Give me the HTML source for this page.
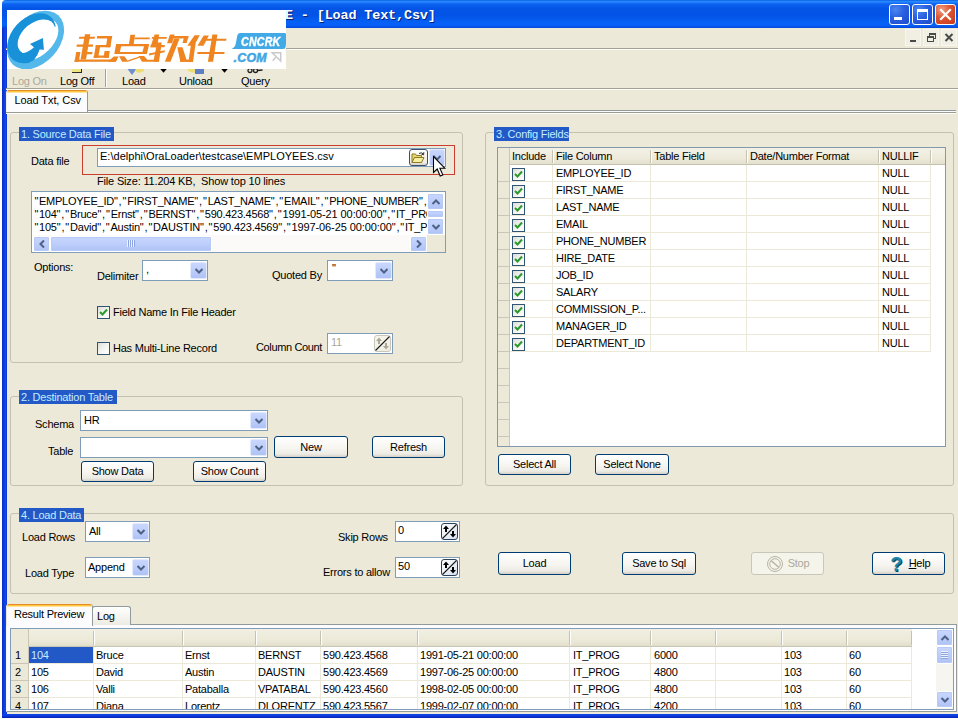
<!DOCTYPE html>
<html>
<head>
<meta charset="utf-8">
<title>Load Text,Csv</title>
<style>
html,body{margin:0;padding:0;overflow:hidden;}
body{width:958px;height:719px;overflow:hidden;background:#fff;position:relative;font-family:"Liberation Sans",sans-serif;font-size:11px;letter-spacing:-0.23px;color:#000;}
.a{position:absolute;box-sizing:border-box;}
.t{position:absolute;white-space:pre;line-height:13px;height:13px;}
/* window chrome */
#win{left:2px;top:0;width:956px;height:718px;background:#ECE9D8;border-top-left-radius:4px;overflow:hidden;}
#title{left:0;top:0;width:960px;height:28px;background:linear-gradient(180deg,#0A5FE0 0%,#2A8CFF 6%,#0D62F2 14%,#0455E6 30%,#0354E6 55%,#0560F5 80%,#0660F8 90%,#0248D8 100%);}
#lb{left:0;top:28px;width:4.6px;height:690px;background:linear-gradient(90deg,#0A2CC8,#0B3CE0 40%,#1648E6 70%,#0A34D0);}
#bb{left:0;top:714px;width:960px;height:4px;background:linear-gradient(180deg,#1648E6,#0B3CE0 40%,#0A2CC8 80%,#061FA8);}
.cap{width:21px;height:21px;top:4px;border:1px solid #fff;border-radius:3px;background:radial-gradient(circle at 30% 25%,#4B86F0 0%,#2A5FE0 45%,#1F4BC8 100%);}
.cap.x{background:radial-gradient(circle at 30% 25%,#F0A080 0%,#DD5330 45%,#C2391C 100%);}
/* group boxes */
.gb{border:1px solid #C4C1B0;border-radius:3px;}
.gl{background:#2359C6;color:#C2ECFF;height:14.4px;line-height:14px;padding-left:2px;white-space:pre;}
/* edits */
.ed{border:1px solid #7F9DB9;background:#fff;}
.btn{border:1px solid #003C74;border-radius:3px;background:linear-gradient(180deg,#FFFFFF 0%,#F6F5F0 55%,#ECEBE4 85%,#D6D0C5 100%);text-align:center;line-height:19px;white-space:pre;}
.btn.dis{border-color:#C9C7BA;background:#F5F4EA;color:#ACA899;}
.dd{width:17px;background:linear-gradient(180deg,#C9D7FE 0%,#BDCEFB 50%,#AEC2F5 100%);border:1px solid #E3EAFE;border-radius:2px;box-shadow:0 0 0 0px #B4C8F6;}
.sb{background:linear-gradient(180deg,#C9D7FE 0%,#BDCEFB 50%,#AEC2F5 100%);border:1px solid #fff;border-radius:2px;box-shadow:inset 0 0 0 1px #B7CAF5;}
.q{letter-spacing:0.8px;}.q1{letter-spacing:0.5px;}
.cb{width:13px;height:13px;border:1px solid #2F5572;background:linear-gradient(135deg,#DCDCD7 0%,#F3F3F0 50%,#FFFFFF 100%);}
</style>
</head>
<body>
<div id="win" class="a">
  <div id="title" class="a"></div>
  <div id="lb" class="a"></div>
  <div id="bb" class="a"></div>
</div>

<div class="t" id="ttl" style="left:285px;top:7.7px;height:18px;line-height:18px;font:bold 13.5px 'Liberation Mono',monospace;letter-spacing:-0.17px;color:#fff;text-shadow:1px 1px 0 #0A1F6E;">E - [Load Text,Csv]</div>
<!-- caption buttons -->
<div class="a cap" style="left:889px;"><div class="a" style="left:4px;top:12px;width:8px;height:3px;background:#fff;"></div></div>
<div class="a cap" style="left:912px;"><div class="a" style="left:4px;top:4px;width:11px;height:11px;border:1px solid #fff;border-top-width:3px;"></div></div>
<div class="a cap x" style="left:935px;"><svg class="a" style="left:0;top:0" width="19" height="19"><path d="M5 5 L14 14 M14 5 L5 14" stroke="#fff" stroke-width="2.2" stroke-linecap="square"/></svg></div>
<!-- mdi buttons -->
<div class="a" style="left:905px;top:29px;width:16px;height:17px;background:#F1EFE4;border:1px solid #F7F6EF;"><div class="a" style="left:4px;top:10px;width:6px;height:2px;background:#4A4A48;"></div></div>
<div class="a" style="left:923px;top:29px;width:16px;height:17px;background:#F1EFE4;border:1px solid #F7F6EF;"><div class="a" style="left:5px;top:3px;width:7px;height:6px;border:1px solid #4A4A48;border-top-width:2px;"></div><div class="a" style="left:3px;top:6px;width:7px;height:6px;border:1px solid #4A4A48;border-top-width:2px;background:#F1EFE4;"></div></div>
<div class="a" style="left:941px;top:29px;width:16px;height:17px;background:#F1EFE4;border:1px solid #F7F6EF;"><svg class="a" style="left:0;top:0" width="14" height="15"><path d="M3.5 4 L10.5 11 M10.5 4 L3.5 11" stroke="#4A4A48" stroke-width="2"/></svg></div>
<!-- menu/toolbar lines -->
<div class="a" style="left:6px;top:48px;width:952px;height:1px;background:#A5A291;"></div>
<div class="a" style="left:6px;top:49px;width:952px;height:1px;background:#fff;"></div>
<div class="a" style="left:6px;top:88px;width:952px;height:1px;background:#A5A291;"></div>
<div class="a" style="left:6px;top:89px;width:952px;height:1px;background:#fff;"></div>


<!-- toolbar -->
<div class="t" style="left:12px;top:75px;color:#ACA899;">Log On</div>
<div class="t" style="left:60px;top:75px;">Log Off</div>
<div class="a" style="left:105px;top:52px;width:1px;height:35px;background:#A5A291;"></div>
<div class="a" style="left:106px;top:52px;width:1px;height:35px;background:#fff;"></div>
<div class="t" style="left:122px;top:75px;">Load</div>
<div class="t" style="left:179px;top:75px;">Unload</div>
<div class="t" style="left:241px;top:75px;">Query</div>
<!-- icon remnants below logo -->
<div class="a" style="left:72px;top:65px;width:10px;height:8px;background:#EDE680;border:1px solid #2A2A2A;border-top:none;border-left:none;"></div>
<svg class="a" style="left:120px;top:66.5px" width="30" height="10"><path d="M6 0 L18 0 L12 8 Z" fill="#6E8FD0"/><path d="M15 0 L24 0 L24 4 Q20 7 16 5 Z" fill="#EBDD72"/></svg>
<svg class="a" style="left:184px;top:66px" width="26" height="10"><path d="M4 0 L14 0 L14 6 Q9 8 4 5 Z" fill="#EBDD72"/><rect x="11" y="2" width="9" height="6" fill="#5F7FC4"/></svg>
<svg class="a" style="left:244px;top:66px" width="22" height="10"><circle cx="6" cy="4.5" r="2" fill="none" stroke="#222" stroke-width="1.3"/><circle cx="11.5" cy="4.5" r="2" fill="none" stroke="#222" stroke-width="1.3"/><path d="M13.5 4.5 L18.5 4" stroke="#222" stroke-width="1.6"/></svg>
<svg class="a" style="left:159px;top:66px" width="9" height="8"><path d="M1.3 3 L7.7 3 L4.5 6.8 Z" fill="#000"/></svg>
<svg class="a" style="left:220px;top:66px" width="9" height="8"><path d="M1.3 3 L7.7 3 L4.5 6.8 Z" fill="#000"/></svg>
<!-- top tab strip -->
<div class="a" style="left:87px;top:110px;width:869px;height:1px;background:#919B9C;"></div>
<div class="a" style="left:6px;top:111px;width:950px;height:1px;background:#FCFCFE;"></div>
<div class="a" style="left:6px;top:112px;width:950px;height:1px;background:#9A9C92;"></div>
<div class="a" style="left:6px;top:113px;width:950px;height:1px;background:#fff;"></div>
<div class="a" style="left:6px;top:90px;width:82px;height:22px;background:#FCFCFE;border:1px solid #919B9C;border-left-color:#F0EFE6;border-bottom:none;border-top:none;border-radius:3px 3px 0 0;overflow:hidden;"><div class="a" style="left:-1px;top:0;width:81px;height:3px;background:linear-gradient(180deg,#E68B2C 0,#E68B2C 33%,#FFC73C 34%,#FFC73C 66%,#FFE39A 67%);"></div></div>
<div class="t" style="left:14.4px;top:94px;letter-spacing:-0.08px;">Load Txt, Csv</div>


<div class="a gb" style="left:10px;top:132px;width:453px;height:231px;"></div>
<div class="a gl" style="left:19px;top:127px;width:95px;">1. Source Data File</div>
<div class="a" style="left:82px;top:145px;width:373px;height:30px;border:1px solid #CB3D2F;"></div>
<div class="t" style="left:31px;top:155px;">Data file</div>
<div class="a ed" style="left:97px;top:148px;width:349px;height:19px;"></div>
<div class="t" style="left:100px;top:150px;letter-spacing:0.02px;">E:\delphi\OraLoader\testcase\EMPLOYEES.csv</div>
<div class="a" style="left:409px;top:149px;width:19px;height:17px;border:1px solid #3A4F6E;border-radius:3px;background:linear-gradient(180deg,#fff,#ECEBE4 85%,#D6D0C5);"></div>
<svg class="a" style="left:411px;top:151px" width="15" height="13"><path d="M1 3 L1 11.5 L10.5 11.5 L10.5 4.5 L5.5 4.5 L4.5 3 Z" fill="#E8D66A" stroke="#8A7A2A" stroke-width="1"/><path d="M1 11.5 L3.5 6.5 L13 6.5 L10.5 11.5 Z" fill="#F7EFA0" stroke="#8A7A2A" stroke-width="1"/><path d="M8 2.5 Q11 0.5 12.5 3.5 M12.8 1.2 L12.6 3.8 L10.4 3.2" fill="none" stroke="#333" stroke-width="1"/></svg>
<div class="a dd" style="left:429px;top:149px;width:16px;height:17px;"></div>
<svg class="a" style="left:431px;top:152px" width="12" height="12"><path transform="translate(6 6)" d="M-3.5 -2 L0 1.5 L3.5 -2" fill="none" stroke="#4D6185" stroke-width="2"/></svg>
<div class="t" style="left:97px;top:175px;letter-spacing:-0.17px;">File Size: 11.204 KB,  Show top 10 lines</div>
<!-- memo -->
<div class="a ed" style="left:31px;top:191px;width:415px;height:62px;"></div>
<div class="a" style="left:33px;top:193px;width:394px;height:41px;overflow:hidden;letter-spacing:-0.25px;"><div class="t" style="left:1.6px;top:2px;"><span class="q1">"</span>EMPLOYEE_ID<span class="q">","</span>FIRST_NAME<span class="q">","</span>LAST_NAME<span class="q">","</span>EMAIL<span class="q">","</span>PHONE_NUMBER<span class="q">","</span>HIRE_DATE</div><div class="t" style="left:1.6px;top:15px;"><span class="q1">"</span>104<span class="q">","</span>Bruce<span class="q">","</span>Ernst<span class="q">","</span>BERNST<span class="q">","</span>590.423.4568<span class="q">","</span><span style="letter-spacing:-0.1px">1991-05-21 00:00:00</span><span class="q">","</span>IT_PROG</div><div class="t" style="left:1.6px;top:28px;letter-spacing:-0.2px;"><span class="q1">"</span>105<span class="q">","</span>David<span class="q">","</span>Austin<span class="q">","</span>DAUSTIN<span class="q">","</span>590.423.4569<span class="q">","</span><span style="letter-spacing:-0.1px">1997-06-25 00:00:00</span><span class="q">","</span>IT_PROG</div></div>
<div class="a" style="left:427px;top:193px;width:17px;height:42px;background:#FBFAF8;"></div>
<div class="a" style="left:33px;top:235px;width:394px;height:17px;background:#FBFAF8;"></div>
<div class="a" style="left:427px;top:235px;width:18px;height:17px;background:#ECE9D8;"></div>
<div class="a sb" style="left:427px;top:193px;width:17px;height:17px;"></div><svg class="a" style="left:429.5px;top:195.5px" width="12" height="12"><path transform="translate(6 6)" d="M-3.5 2 L0 -1.5 L3.5 2" fill="none" stroke="#4D6185" stroke-width="2"/></svg><div class="a sb" style="left:427px;top:218px;width:17px;height:17px;"></div><svg class="a" style="left:429.5px;top:220.5px" width="12" height="12"><path transform="translate(6 6)" d="M-3.5 -2 L0 1.5 L3.5 -2" fill="none" stroke="#4D6185" stroke-width="2"/></svg>
<div class="a sb" style="left:427px;top:210px;width:17px;height:8px;"></div>
<div class="a sb" style="left:33px;top:236px;width:17px;height:16px;"></div><svg class="a" style="left:35.5px;top:237.5px" width="12" height="12"><path transform="translate(6 6)" d="M2 -3.5 L-1.5 0 L2 3.5" fill="none" stroke="#4D6185" stroke-width="2"/></svg><div class="a sb" style="left:410px;top:236px;width:17px;height:16px;"></div><svg class="a" style="left:412.5px;top:237.5px" width="12" height="12"><path transform="translate(6 6)" d="M-2 -3.5 L1.5 0 L-2 3.5" fill="none" stroke="#4D6185" stroke-width="2"/></svg>
<div class="a sb" style="left:50px;top:236px;width:162px;height:16px;"></div>
<div class="a" style="left:127px;top:240px;width:1px;height:7px;background:#EEF3FE;box-shadow:1px 0 0 #8CA5E0,2px 0 0 #EEF3FE,3px 0 0 #8CA5E0,4px 0 0 #EEF3FE,5px 0 0 #8CA5E0,6px 0 0 #EEF3FE,7px 0 0 #8CA5E0;"></div>
<div class="t" style="left:34px;top:261px;">Options:</div>
<div class="t" style="left:97px;top:270px;">Delimiter</div>
<div class="a ed" style="left:142px;top:260px;width:66px;height:21px;"></div><div class="a dd" style="left:190px;top:262px;height:17px;"></div><svg class="a" style="left:192.5px;top:265.0px" width="12" height="12"><path transform="translate(6 6)" d="M-3.5 -2 L0 1.5 L3.5 -2" fill="none" stroke="#4D6185" stroke-width="2"/></svg><div class="t" style="left:146px;top:263px;">,</div>
<div class="t" style="left:272px;top:269px;">Quoted By</div>
<div class="a ed" style="left:327px;top:260px;width:66px;height:21px;"></div><div class="a dd" style="left:375px;top:262px;height:17px;"></div><svg class="a" style="left:377.5px;top:265.0px" width="12" height="12"><path transform="translate(6 6)" d="M-3.5 -2 L0 1.5 L3.5 -2" fill="none" stroke="#4D6185" stroke-width="2"/></svg><div class="t" style="left:332px;top:262px;">"</div>
<div class="a cb" style="left:97px;top:306px;"></div>
<svg class="a" style="left:97px;top:306px" width="13" height="13"><path d="M3 6 L5.5 8.5 L10 3.5" fill="none" stroke="#2B9A2B" stroke-width="2"/></svg>
<div class="t" style="left:113px;top:306px;">Field Name In File Header</div>
<div class="a cb" style="left:97px;top:342px;"></div>
<div class="t" style="left:113px;top:342px;">Has Multi-Line Record</div>
<div class="t" style="left:256px;top:341px;letter-spacing:-0.36px;">Column Count</div>
<div class="a ed" style="left:327px;top:333px;width:66px;height:21px;"></div>
<div class="t" style="left:331px;top:336px;color:#ACA899;">11</div>
<svg class="a" style="left:374px;top:335px" width="17" height="17"><defs><linearGradient id="sg374335" x1="0" y1="0" x2="1" y2="1"><stop offset="0" stop-color="#F7F6EE"/><stop offset="1" stop-color="#EFEDE2"/></linearGradient></defs><rect x="0.5" y="0.5" width="16" height="16" rx="2.5" fill="url(#sg374335)" stroke="#C9C7BA"/><path d="M1.5 15.5 L15.5 1.5" stroke="#1a1a1a" stroke-width="1.1"/><path d="M5 2.5 L2 6 L4 6 L4 9 L6 9 L6 6 L8 6 Z" fill="#ACA899"/><path d="M12 14.5 L9 11 L11 11 L11 8 L13 8 L13 11 L15 11 Z" fill="#ACA899"/></svg>


<div class="a gb" style="left:10px;top:396px;width:453px;height:90px;"></div>
<div class="a gl" style="left:19px;top:390px;width:98px;">2. Destination Table</div>
<div class="t" style="left:35px;top:418px;">Schema</div>
<div class="a ed" style="left:80px;top:410px;width:188px;height:21px;"></div><div class="a dd" style="left:250px;top:412px;height:17px;"></div><svg class="a" style="left:252.5px;top:415.0px" width="12" height="12"><path transform="translate(6 6)" d="M-3.5 -2 L0 1.5 L3.5 -2" fill="none" stroke="#4D6185" stroke-width="2"/></svg><div class="t" style="left:84px;top:414px;">HR</div>
<div class="t" style="left:48px;top:445px;">Table</div>
<div class="a ed" style="left:80px;top:437px;width:188px;height:21px;"></div><div class="a dd" style="left:250px;top:439px;height:17px;"></div><svg class="a" style="left:252.5px;top:442.0px" width="12" height="12"><path transform="translate(6 6)" d="M-3.5 -2 L0 1.5 L3.5 -2" fill="none" stroke="#4D6185" stroke-width="2"/></svg><div class="a btn " style="left:274px;top:436px;width:74px;height:22px;line-height:20px;">New</div><div class="a btn " style="left:372px;top:436px;width:73px;height:22px;line-height:20px;">Refresh</div><div class="a btn " style="left:81px;top:461px;width:73px;height:21px;line-height:19px;">Show Data</div><div class="a btn " style="left:193px;top:461px;width:73px;height:21px;line-height:19px;">Show Count</div>

<div class="a gb" style="left:485px;top:132px;width:469px;height:354px;"></div>
<div class="a gl" style="left:494px;top:127px;width:75px;">3. Config Fields</div>
<div class="a" style="left:497px;top:147px;width:449px;height:300px;border:1px solid #8497AC;background:#fff;"></div>
<div class="a" style="left:498px;top:148px;width:447px;height:17px;background:linear-gradient(180deg,#F3F1E6 0%,#EEEBDC 60%,#E4E0CE 100%);border-bottom:1px solid #C5C1B0;"></div>
<div class="a" style="left:498px;top:148px;width:12px;height:298px;background:#ECE9D8;border-right:1px solid #CBC7B8;"></div>
<div class="a" style="left:552px;top:150px;width:1px;height:13px;background:#C5C2B2;"></div><div class="a" style="left:553px;top:150px;width:1px;height:13px;background:#fff;"></div><div class="a" style="left:650px;top:150px;width:1px;height:13px;background:#C5C2B2;"></div><div class="a" style="left:651px;top:150px;width:1px;height:13px;background:#fff;"></div><div class="a" style="left:746px;top:150px;width:1px;height:13px;background:#C5C2B2;"></div><div class="a" style="left:747px;top:150px;width:1px;height:13px;background:#fff;"></div><div class="a" style="left:878px;top:150px;width:1px;height:13px;background:#C5C2B2;"></div><div class="a" style="left:879px;top:150px;width:1px;height:13px;background:#fff;"></div><div class="a" style="left:930px;top:150px;width:1px;height:13px;background:#C5C2B2;"></div><div class="a" style="left:931px;top:150px;width:1px;height:13px;background:#fff;"></div><div class="t" style="left:512px;top:150px;">Include</div><div class="t" style="left:556px;top:150px;">File Column</div><div class="t" style="left:654px;top:150px;">Table Field</div><div class="t" style="left:750px;top:150px;">Date/Number Format</div><div class="t" style="left:882px;top:150px;">NULLIF</div><div class="a" style="left:510px;top:181px;width:421px;height:1px;background:#ECE9D8;"></div><div class="a cb" style="left:512px;top:168px;border-color:#2F5572;"></div><svg class="a" style="left:512px;top:168px" width="13" height="13"><path d="M3 6 L5.5 8.5 L10 3.5" fill="none" stroke="#2B9A2B" stroke-width="2"/></svg><div class="t" style="left:556px;top:167px;">EMPLOYEE_ID</div><div class="t" style="left:882px;top:167px;">NULL</div><div class="a" style="left:510px;top:198px;width:421px;height:1px;background:#ECE9D8;"></div><div class="a cb" style="left:512px;top:185px;border-color:#2F5572;"></div><svg class="a" style="left:512px;top:185px" width="13" height="13"><path d="M3 6 L5.5 8.5 L10 3.5" fill="none" stroke="#2B9A2B" stroke-width="2"/></svg><div class="t" style="left:556px;top:184px;">FIRST_NAME</div><div class="t" style="left:882px;top:184px;">NULL</div><div class="a" style="left:510px;top:215px;width:421px;height:1px;background:#ECE9D8;"></div><div class="a cb" style="left:512px;top:202px;border-color:#2F5572;"></div><svg class="a" style="left:512px;top:202px" width="13" height="13"><path d="M3 6 L5.5 8.5 L10 3.5" fill="none" stroke="#2B9A2B" stroke-width="2"/></svg><div class="t" style="left:556px;top:201px;">LAST_NAME</div><div class="t" style="left:882px;top:201px;">NULL</div><div class="a" style="left:510px;top:232px;width:421px;height:1px;background:#ECE9D8;"></div><div class="a cb" style="left:512px;top:219px;border-color:#2F5572;"></div><svg class="a" style="left:512px;top:219px" width="13" height="13"><path d="M3 6 L5.5 8.5 L10 3.5" fill="none" stroke="#2B9A2B" stroke-width="2"/></svg><div class="t" style="left:556px;top:218px;">EMAIL</div><div class="t" style="left:882px;top:218px;">NULL</div><div class="a" style="left:510px;top:249px;width:421px;height:1px;background:#ECE9D8;"></div><div class="a cb" style="left:512px;top:236px;border-color:#2F5572;"></div><svg class="a" style="left:512px;top:236px" width="13" height="13"><path d="M3 6 L5.5 8.5 L10 3.5" fill="none" stroke="#2B9A2B" stroke-width="2"/></svg><div class="t" style="left:556px;top:235px;">PHONE_NUMBER</div><div class="t" style="left:882px;top:235px;">NULL</div><div class="a" style="left:510px;top:266px;width:421px;height:1px;background:#ECE9D8;"></div><div class="a cb" style="left:512px;top:253px;border-color:#2F5572;"></div><svg class="a" style="left:512px;top:253px" width="13" height="13"><path d="M3 6 L5.5 8.5 L10 3.5" fill="none" stroke="#2B9A2B" stroke-width="2"/></svg><div class="t" style="left:556px;top:252px;">HIRE_DATE</div><div class="t" style="left:882px;top:252px;">NULL</div><div class="a" style="left:510px;top:283px;width:421px;height:1px;background:#ECE9D8;"></div><div class="a cb" style="left:512px;top:270px;border-color:#2F5572;"></div><svg class="a" style="left:512px;top:270px" width="13" height="13"><path d="M3 6 L5.5 8.5 L10 3.5" fill="none" stroke="#2B9A2B" stroke-width="2"/></svg><div class="t" style="left:556px;top:269px;">JOB_ID</div><div class="t" style="left:882px;top:269px;">NULL</div><div class="a" style="left:510px;top:300px;width:421px;height:1px;background:#ECE9D8;"></div><div class="a cb" style="left:512px;top:287px;border-color:#2F5572;"></div><svg class="a" style="left:512px;top:287px" width="13" height="13"><path d="M3 6 L5.5 8.5 L10 3.5" fill="none" stroke="#2B9A2B" stroke-width="2"/></svg><div class="t" style="left:556px;top:286px;">SALARY</div><div class="t" style="left:882px;top:286px;">NULL</div><div class="a" style="left:510px;top:317px;width:421px;height:1px;background:#ECE9D8;"></div><div class="a cb" style="left:512px;top:304px;border-color:#2F5572;"></div><svg class="a" style="left:512px;top:304px" width="13" height="13"><path d="M3 6 L5.5 8.5 L10 3.5" fill="none" stroke="#2B9A2B" stroke-width="2"/></svg><div class="t" style="left:556px;top:303px;">COMMISSION_P...</div><div class="t" style="left:882px;top:303px;">NULL</div><div class="a" style="left:510px;top:334px;width:421px;height:1px;background:#ECE9D8;"></div><div class="a cb" style="left:512px;top:321px;border-color:#2F5572;"></div><svg class="a" style="left:512px;top:321px" width="13" height="13"><path d="M3 6 L5.5 8.5 L10 3.5" fill="none" stroke="#2B9A2B" stroke-width="2"/></svg><div class="t" style="left:556px;top:320px;">MANAGER_ID</div><div class="t" style="left:882px;top:320px;">NULL</div><div class="a" style="left:510px;top:351px;width:421px;height:1px;background:#ECE9D8;"></div><div class="a cb" style="left:512px;top:338px;border-color:#2F5572;"></div><svg class="a" style="left:512px;top:338px" width="13" height="13"><path d="M3 6 L5.5 8.5 L10 3.5" fill="none" stroke="#2B9A2B" stroke-width="2"/></svg><div class="t" style="left:556px;top:337px;">DEPARTMENT_ID</div><div class="t" style="left:882px;top:337px;">NULL</div><div class="a" style="left:552px;top:165px;width:1px;height:187px;background:#ECE9D8;"></div><div class="a" style="left:650px;top:165px;width:1px;height:187px;background:#ECE9D8;"></div><div class="a" style="left:746px;top:165px;width:1px;height:187px;background:#ECE9D8;"></div><div class="a" style="left:878px;top:165px;width:1px;height:187px;background:#ECE9D8;"></div><div class="a" style="left:930px;top:165px;width:1px;height:187px;background:#ECE9D8;"></div><div class="a" style="left:498px;top:181px;width:11px;height:1px;background:#CBC7B8;"></div><div class="a" style="left:498px;top:198px;width:11px;height:1px;background:#CBC7B8;"></div><div class="a" style="left:498px;top:215px;width:11px;height:1px;background:#CBC7B8;"></div><div class="a" style="left:498px;top:232px;width:11px;height:1px;background:#CBC7B8;"></div><div class="a" style="left:498px;top:249px;width:11px;height:1px;background:#CBC7B8;"></div><div class="a" style="left:498px;top:266px;width:11px;height:1px;background:#CBC7B8;"></div><div class="a" style="left:498px;top:283px;width:11px;height:1px;background:#CBC7B8;"></div><div class="a" style="left:498px;top:300px;width:11px;height:1px;background:#CBC7B8;"></div><div class="a" style="left:498px;top:317px;width:11px;height:1px;background:#CBC7B8;"></div><div class="a" style="left:498px;top:334px;width:11px;height:1px;background:#CBC7B8;"></div><div class="a" style="left:498px;top:351px;width:11px;height:1px;background:#CBC7B8;"></div><div class="a" style="left:498px;top:368px;width:11px;height:1px;background:#CBC7B8;"></div><div class="a" style="left:498px;top:385px;width:11px;height:1px;background:#CBC7B8;"></div><div class="a" style="left:498px;top:402px;width:11px;height:1px;background:#CBC7B8;"></div><div class="a" style="left:498px;top:419px;width:11px;height:1px;background:#CBC7B8;"></div><div class="a" style="left:498px;top:436px;width:11px;height:1px;background:#CBC7B8;"></div><div class="a btn " style="left:498px;top:454px;width:73px;height:21px;line-height:19px;">Select All</div><div class="a btn " style="left:595px;top:454px;width:74px;height:21px;line-height:19px;">Select None</div>

<div class="a gb" style="left:10px;top:513px;width:944px;height:81px;"></div>
<div class="a gl" style="left:19px;top:508px;width:65px;">4. Load Data</div>
<div class="t" style="left:22px;top:531px;">Load Rows</div>
<div class="a ed" style="left:85px;top:521px;width:65px;height:21px;"></div><div class="a dd" style="left:132px;top:523px;height:17px;"></div><svg class="a" style="left:134.5px;top:526.0px" width="12" height="12"><path transform="translate(6 6)" d="M-3.5 -2 L0 1.5 L3.5 -2" fill="none" stroke="#4D6185" stroke-width="2"/></svg><div class="t" style="left:89px;top:525px;">All</div>
<div class="t" style="left:25px;top:567px;">Load Type</div>
<div class="a ed" style="left:85px;top:557px;width:65px;height:21px;"></div><div class="a dd" style="left:132px;top:559px;height:17px;"></div><svg class="a" style="left:134.5px;top:562.0px" width="12" height="12"><path transform="translate(6 6)" d="M-3.5 -2 L0 1.5 L3.5 -2" fill="none" stroke="#4D6185" stroke-width="2"/></svg><div class="t" style="left:88px;top:561px;">Append</div>
<div class="t" style="left:338px;top:531px;">Skip Rows</div>
<div class="a ed" style="left:395px;top:521px;width:65px;height:21px;"></div>
<div class="t" style="left:398px;top:524px;">0</div>
<div class="t" style="left:323px;top:566px;">Errors to allow</div>
<div class="a ed" style="left:395px;top:557px;width:65px;height:21px;"></div>
<div class="t" style="left:398px;top:560px;">50</div>
<svg class="a" style="left:441px;top:523px" width="17" height="17"><defs><linearGradient id="sg441523" x1="0" y1="0" x2="1" y2="1"><stop offset="0" stop-color="#FFFFFF"/><stop offset="1" stop-color="#D6E0EE"/></linearGradient></defs><rect x="0.5" y="0.5" width="16" height="16" rx="2.5" fill="url(#sg441523)" stroke="#2C4258"/><path d="M1.5 15.5 L15.5 1.5" stroke="#1a1a1a" stroke-width="1.1"/><path d="M5 2.5 L2 6 L4 6 L4 9 L6 9 L6 6 L8 6 Z" fill="#000"/><path d="M12 14.5 L9 11 L11 11 L11 8 L13 8 L13 11 L15 11 Z" fill="#000"/></svg><svg class="a" style="left:441px;top:559px" width="17" height="17"><defs><linearGradient id="sg441559" x1="0" y1="0" x2="1" y2="1"><stop offset="0" stop-color="#FFFFFF"/><stop offset="1" stop-color="#D6E0EE"/></linearGradient></defs><rect x="0.5" y="0.5" width="16" height="16" rx="2.5" fill="url(#sg441559)" stroke="#2C4258"/><path d="M1.5 15.5 L15.5 1.5" stroke="#1a1a1a" stroke-width="1.1"/><path d="M5 2.5 L2 6 L4 6 L4 9 L6 9 L6 6 L8 6 Z" fill="#000"/><path d="M12 14.5 L9 11 L11 11 L11 8 L13 8 L13 11 L15 11 Z" fill="#000"/></svg>
<div class="a btn " style="left:498px;top:552px;width:73px;height:23px;line-height:21px;">Load</div><div class="a btn " style="left:622px;top:552px;width:74px;height:23px;line-height:21px;">Save to Sql</div><div class="a btn dis" style="left:751px;top:552px;width:73px;height:23px;line-height:21px;"><span style="padding-left:22px">Stop</span></div><div class="a btn " style="left:872px;top:552px;width:73px;height:23px;line-height:21px;"><span style="padding-left:22px"><u>H</u>elp</span></div>

<!-- result tabs -->
<div class="a" style="left:6px;top:624px;width:951px;height:88px;background:#FCFCFE;border:1px solid #919B9C;border-left-color:#F4F6FB;"></div>
<div class="a" style="left:92px;top:606px;width:39px;height:19px;background:linear-gradient(180deg,#fff,#F4F3EE 60%,#ECEBE3);border:1px solid #919B9C;border-bottom:none;border-radius:3px 3px 0 0;"></div>
<div class="t" style="left:97px;top:610px;">Log</div>
<div class="a" style="left:6px;top:604px;width:87px;height:22px;background:#FCFCFE;border:1px solid #919B9C;border-left-color:#E8E6D8;border-bottom:none;border-top:none;border-radius:3px 3px 0 0;overflow:hidden;"><div class="a" style="left:-1px;top:0;width:86px;height:3px;background:linear-gradient(180deg,#E68B2C 0,#E68B2C 33%,#FFC73C 34%,#FFC73C 66%,#FFE39A 67%);"></div></div>
<div class="t" style="left:14px;top:608px;">Result Preview</div>
<!-- result grid -->
<div class="a" style="left:10px;top:628px;width:944px;height:82px;border:1px solid #7F9DB9;background:#fff;overflow:hidden;" id="rg">
<div class="a" style="left:0;top:0;width:901px;height:18px;background:linear-gradient(180deg,#F1EFE2 0%,#ECE9D8 70%,#E2DECB 100%);border-bottom:1px solid #C9C6B6;"></div>
<div class="a" style="left:0;top:0;width:18px;height:90px;background:#ECE9D8;border-right:1px solid #C9C6B6;"></div>
<div class="a" style="left:82px;top:2px;width:1px;height:14px;background:#C5C2B2;"></div><div class="a" style="left:83px;top:2px;width:1px;height:14px;background:#fff;"></div><div class="a" style="left:82px;top:18px;width:1px;height:70px;background:#ECE9D8;"></div><div class="a" style="left:171px;top:2px;width:1px;height:14px;background:#C5C2B2;"></div><div class="a" style="left:172px;top:2px;width:1px;height:14px;background:#fff;"></div><div class="a" style="left:171px;top:18px;width:1px;height:70px;background:#ECE9D8;"></div><div class="a" style="left:244px;top:2px;width:1px;height:14px;background:#C5C2B2;"></div><div class="a" style="left:245px;top:2px;width:1px;height:14px;background:#fff;"></div><div class="a" style="left:244px;top:18px;width:1px;height:70px;background:#ECE9D8;"></div><div class="a" style="left:309px;top:2px;width:1px;height:14px;background:#C5C2B2;"></div><div class="a" style="left:310px;top:2px;width:1px;height:14px;background:#fff;"></div><div class="a" style="left:309px;top:18px;width:1px;height:70px;background:#ECE9D8;"></div><div class="a" style="left:406px;top:2px;width:1px;height:14px;background:#C5C2B2;"></div><div class="a" style="left:407px;top:2px;width:1px;height:14px;background:#fff;"></div><div class="a" style="left:406px;top:18px;width:1px;height:70px;background:#ECE9D8;"></div><div class="a" style="left:558px;top:2px;width:1px;height:14px;background:#C5C2B2;"></div><div class="a" style="left:559px;top:2px;width:1px;height:14px;background:#fff;"></div><div class="a" style="left:558px;top:18px;width:1px;height:70px;background:#ECE9D8;"></div><div class="a" style="left:639px;top:2px;width:1px;height:14px;background:#C5C2B2;"></div><div class="a" style="left:640px;top:2px;width:1px;height:14px;background:#fff;"></div><div class="a" style="left:639px;top:18px;width:1px;height:70px;background:#ECE9D8;"></div><div class="a" style="left:704px;top:2px;width:1px;height:14px;background:#C5C2B2;"></div><div class="a" style="left:705px;top:2px;width:1px;height:14px;background:#fff;"></div><div class="a" style="left:704px;top:18px;width:1px;height:70px;background:#ECE9D8;"></div><div class="a" style="left:770px;top:2px;width:1px;height:14px;background:#C5C2B2;"></div><div class="a" style="left:771px;top:2px;width:1px;height:14px;background:#fff;"></div><div class="a" style="left:770px;top:18px;width:1px;height:70px;background:#ECE9D8;"></div><div class="a" style="left:835px;top:2px;width:1px;height:14px;background:#C5C2B2;"></div><div class="a" style="left:836px;top:2px;width:1px;height:14px;background:#fff;"></div><div class="a" style="left:835px;top:18px;width:1px;height:70px;background:#ECE9D8;"></div><div class="a" style="left:900px;top:2px;width:1px;height:14px;background:#C5C2B2;"></div><div class="a" style="left:901px;top:2px;width:1px;height:14px;background:#fff;"></div><div class="a" style="left:900px;top:18px;width:1px;height:70px;background:#ECE9D8;"></div><div class="a" style="left:18px;top:34px;width:883px;height:1px;background:#ECE9D8;"></div><div class="a" style="left:0px;top:34px;width:17px;height:1px;background:#C9C6B6;"></div><div class="t" style="left:4px;top:20px;">1</div><div class="a" style="left:18px;top:18px;width:64px;height:16px;background:#2359C6;"></div><div class="t" style="left:20px;top:20px;color:#C2ECFF;">104</div><div class="t" style="left:85px;top:20px;">Bruce</div><div class="t" style="left:174px;top:20px;">Ernst</div><div class="t" style="left:247px;top:20px;">BERNST</div><div class="t" style="left:312px;top:20px;">590.423.4568</div><div class="t" style="left:409px;top:20px;">1991-05-21 00:00:00</div><div class="t" style="left:562px;top:20px;">IT_PROG</div><div class="t" style="left:643px;top:20px;">6000</div><div class="t" style="left:773px;top:20px;">103</div><div class="t" style="left:838px;top:20px;">60</div><div class="a" style="left:18px;top:51px;width:883px;height:1px;background:#ECE9D8;"></div><div class="a" style="left:0px;top:51px;width:17px;height:1px;background:#C9C6B6;"></div><div class="t" style="left:4px;top:37px;">2</div><div class="t" style="left:20px;top:37px;">105</div><div class="t" style="left:85px;top:37px;">David</div><div class="t" style="left:174px;top:37px;">Austin</div><div class="t" style="left:247px;top:37px;">DAUSTIN</div><div class="t" style="left:312px;top:37px;">590.423.4569</div><div class="t" style="left:409px;top:37px;">1997-06-25 00:00:00</div><div class="t" style="left:562px;top:37px;">IT_PROG</div><div class="t" style="left:643px;top:37px;">4800</div><div class="t" style="left:773px;top:37px;">103</div><div class="t" style="left:838px;top:37px;">60</div><div class="a" style="left:18px;top:68px;width:883px;height:1px;background:#ECE9D8;"></div><div class="a" style="left:0px;top:68px;width:17px;height:1px;background:#C9C6B6;"></div><div class="t" style="left:4px;top:54px;">3</div><div class="t" style="left:20px;top:54px;">106</div><div class="t" style="left:85px;top:54px;">Valli</div><div class="t" style="left:174px;top:54px;">Pataballa</div><div class="t" style="left:247px;top:54px;">VPATABAL</div><div class="t" style="left:312px;top:54px;">590.423.4560</div><div class="t" style="left:409px;top:54px;">1998-02-05 00:00:00</div><div class="t" style="left:562px;top:54px;">IT_PROG</div><div class="t" style="left:643px;top:54px;">4800</div><div class="t" style="left:773px;top:54px;">103</div><div class="t" style="left:838px;top:54px;">60</div><div class="a" style="left:18px;top:85px;width:883px;height:1px;background:#ECE9D8;"></div><div class="a" style="left:0px;top:85px;width:17px;height:1px;background:#C9C6B6;"></div><div class="t" style="left:4px;top:71px;">4</div><div class="t" style="left:20px;top:71px;">107</div><div class="t" style="left:85px;top:71px;">Diana</div><div class="t" style="left:174px;top:71px;">Lorentz</div><div class="t" style="left:247px;top:71px;">DLORENTZ</div><div class="t" style="left:312px;top:71px;">590.423.5567</div><div class="t" style="left:409px;top:71px;">1999-02-07 00:00:00</div><div class="t" style="left:562px;top:71px;">IT_PROG</div><div class="t" style="left:643px;top:71px;">4200</div><div class="t" style="left:773px;top:71px;">103</div><div class="t" style="left:838px;top:71px;">60</div><div class="a" style="left:925px;top:0;width:17px;height:80px;background:#F6F5F0;"></div></div><div class="a sb" style="left:936px;top:629px;width:17px;height:17px;"></div><svg class="a" style="left:938.5px;top:631.5px" width="12" height="12"><path transform="translate(6 6)" d="M-3.5 2 L0 -1.5 L3.5 2" fill="none" stroke="#4D6185" stroke-width="2"/></svg><div class="a sb" style="left:936px;top:691px;width:17px;height:17px;"></div><svg class="a" style="left:938.5px;top:693.5px" width="12" height="12"><path transform="translate(6 6)" d="M-3.5 -2 L0 1.5 L3.5 -2" fill="none" stroke="#4D6185" stroke-width="2"/></svg><div class="a sb" style="left:936px;top:646px;width:17px;height:18px;"></div><div class="a" style="left:941px;top:651px;width:7px;height:1px;background:#EEF3FE;box-shadow:0 1px 0 #8CA5E0,0 2px 0 #EEF3FE,0 3px 0 #8CA5E0,0 4px 0 #EEF3FE,0 5px 0 #8CA5E0,0 6px 0 #EEF3FE,0 7px 0 #8CA5E0;"></div>

<svg class="a" style="left:766px;top:555px" width="18" height="18"><circle cx="9" cy="9" r="7.5" fill="none" stroke="#B8B5A6" stroke-width="1"/><circle cx="9" cy="9" r="5.3" fill="none" stroke="#B8B5A6" stroke-width="1"/><path d="M5 5.5 L13 12.5" stroke="#B8B5A6" stroke-width="1.6"/></svg>
<div class="t" style="left:890.3px;top:553px;height:22px;line-height:22px;font:bold 20px 'Liberation Sans',sans-serif;letter-spacing:0;color:#1D86A8;text-shadow:1px 1px 0 #0B4A5E;">?</div>

<!-- cursor -->
<svg class="a" style="left:431.5px;top:154.5px" width="16" height="25"><path d="M1.5 1.5 L1.5 17.5 L5.2 14 L8.2 21 L10.8 19.9 L7.9 13.2 L12.8 13.2 Z" fill="#fff" stroke="#000" stroke-width="1.1" stroke-linejoin="miter"/></svg>

<div class="a" style="left:6.6px;top:10px;width:279.4px;height:59px;background:#fff;"></div>
<svg class="a" style="left:0;top:0" width="300" height="75" viewBox="0 0 300 75">
<defs><clipPath id="lc"><rect x="6" y="10" width="280" height="59"/></clipPath></defs>
<g clip-path="url(#lc)">
<ellipse cx="35.6" cy="40" rx="33.5" ry="23.4" transform="rotate(-47.5 35.6 40)" fill="#55B8EA"/>
<ellipse cx="37.4" cy="39.4" rx="25.0" ry="15.6" transform="rotate(-44 37.4 39.4)" fill="#fff"/>
<ellipse cx="36.4" cy="37.0" rx="21.5" ry="14.2" transform="rotate(-40 36.4 37.0)" fill="#fff"/>
<mask id="dm" maskUnits="userSpaceOnUse" x="0" y="0" width="80" height="80"><rect x="0" y="0" width="80" height="80" fill="#000"/><ellipse cx="31.6" cy="38.2" rx="28.6" ry="20.0" transform="rotate(-47.5 31.6 38.2)" fill="#fff"/><ellipse cx="36.4" cy="37.0" rx="21.5" ry="14.2" transform="rotate(-40 36.4 37.0)" fill="#000"/><polygon points="28.4,62.9 33.6,60.2 36.9,55.2 39.6,49.6 43.9,49.8 42.9,38 55.6,26.4 72,20 72,78 28,78" fill="#000"/></mask>
<rect x="0" y="0" width="80" height="80" fill="#1891D8" mask="url(#dm)"/>
<path d="M42.9 38.0 L30.0 44.0 L34.0 47.2 Q29.5 51.8 22.5 53.3 L17 53 L20 61 L28.4 62.9 Q33.6 60.5 36.9 55.2 Q38.8 52 39.6 49.6 L43.9 49.8 Z" fill="#1891D8"/>
<g fill="#EF8520"><polygon points="84.9,34.2 90.3,34.2 86.0,59.6 80.6,59.6"/><polygon points="79.3,36.7 95.0,36.7 94.6,38.8 78.9,38.8"/><polygon points="76.9,44.5 93.2,44.5 92.8,46.8 76.5,46.8"/><polygon points="86.3,52.1 92.5,52.1 92.2,54.2 86.0,54.2"/><polygon points="76.2,52.1 80.4,52.1 78.8,61.8 74.6,61.8"/><polygon points="74.8,59.4 116.4,59.4 116.0,61.8 74.4,61.8"/><polygon points="97.2,36.1 112.2,36.1 111.8,38.5 96.8,38.5"/><polygon points="107.7,36.1 112.2,36.1 110.3,47.3 105.8,47.3"/><polygon points="95.9,45.0 110.7,45.0 110.3,47.3 95.5,47.3"/><polygon points="95.9,45.0 100.4,45.0 98.2,57.8 93.7,57.8"/><polygon points="93.9,55.5 109.3,55.5 108.9,57.8 93.5,57.8"/><polygon points="104.6,51.0 109.8,51.0 108.7,57.8 103.5,57.8"/><polygon points="130.4,34.7 135.1,34.7 133.6,44.4 128.9,44.4"/><polygon points="134.6,37.5 149.8,37.5 149.6,39.3 134.3,39.3"/><path fill-rule="evenodd" d="M116.1 44.1 L149.2 44.1 L146.9 54.1 L114.3 54.1 Z M121.2 46.3 L144 46.3 L142.4 51.9 L119.8 51.9 Z"/><polygon points="113.7,56.4 118.6,56.4 115.8,61.8 108.0,61.8"/><polygon points="119.2,56.2 124.2,56.2 128.6,61.8 122.1,61.8"/><polygon points="128.0,60.2 139.3,56.4 139.6,57.8 128.6,61.6"/><polygon points="138.5,56.0 144.0,56.0 147.5,59.8 158.8,59.8 158.8,61.8 142.0,61.8"/><polygon points="152.0,36.9 166.9,36.9 166.6,38.7 151.7,38.7"/><polygon points="154.6,34.4 159.2,34.4 157.0,47.2 150.4,47.2"/><polygon points="150.7,45.1 164.8,45.1 164.5,47.3 150.4,47.3"/><polygon points="157.2,42.5 161.7,42.5 159.0,61.8 153.3,61.8"/><polygon points="149.1,53.6 164.8,50.2 164.6,52.2 149.0,55.6"/><polygon points="170.0,34.4 174.6,34.4 172.1,43.3 167.1,43.3"/><polygon points="169.7,36.1 188.5,36.1 188.1,38.5 169.2,38.5"/><polygon points="184.4,36.1 188.5,36.1 186.7,42.9 182.5,42.9"/><polygon points="174.2,38.4 179.6,38.4 170.5,61.8 164.8,61.8"/><polygon points="177.3,47.2 182.5,47.2 186.5,59.8 193.0,59.8 193.0,61.8 180.4,61.8"/><polygon points="194.6,35.2 199.8,35.2 194.0,45.7 187.3,45.7"/><polygon points="191.2,43.0 195.7,43.0 193.0,61.8 188.4,61.8"/><polygon points="180.0,59.8 193.0,59.8 193.0,61.8 180.0,61.8"/><polygon points="203.7,35.5 208.9,35.5 203.5,45.7 197.5,45.7"/><polygon points="204.8,38.8 226.5,38.8 226.2,40.8 204.5,40.8"/><polygon points="197.5,52.1 224.6,52.1 224.3,54.1 197.2,54.1"/><polygon points="212.4,34.4 217.4,34.4 213.1,61.8 207.9,61.8"/></g>
<path d="M240.5 33 L284.3 33 Q286.9 33 286.7 35.5 L285.7 46.5 Q285.5 49 283 49 L231.5 49 Q235.2 47 235.8 43.5 L237.2 36 Q237.7 33 240.5 33 Z" fill="#40A9E6"/>
</g>
</svg>
<div class="t" style="left:241px;top:34.5px;height:14px;line-height:14px;font:italic bold 12.5px 'Liberation Sans',sans-serif;letter-spacing:0.25px;color:#fff;-webkit-text-stroke:0.4px #fff;transform:scaleX(0.85);transform-origin:0 0;">CNCRK</div>
<div class="t" style="left:233.6px;top:50.8px;height:14px;line-height:14px;font:italic bold 12.4px 'Liberation Sans',sans-serif;letter-spacing:0.2px;color:#3FA6E3;-webkit-text-stroke:0.5px #3FA6E3;">.COM</div>
<svg class="a" style="left:270px;top:50px" width="14" height="14"><path d="M2.2 2.8 L10.7 2.8 L10.7 11 Z" fill="none" stroke="#C9C9C9" stroke-width="1.5" stroke-linejoin="miter"/><path d="M2.7 10.7 L5.8 7.2" stroke="#C9C9C9" stroke-width="1.5"/></svg>

</body>
</html>
